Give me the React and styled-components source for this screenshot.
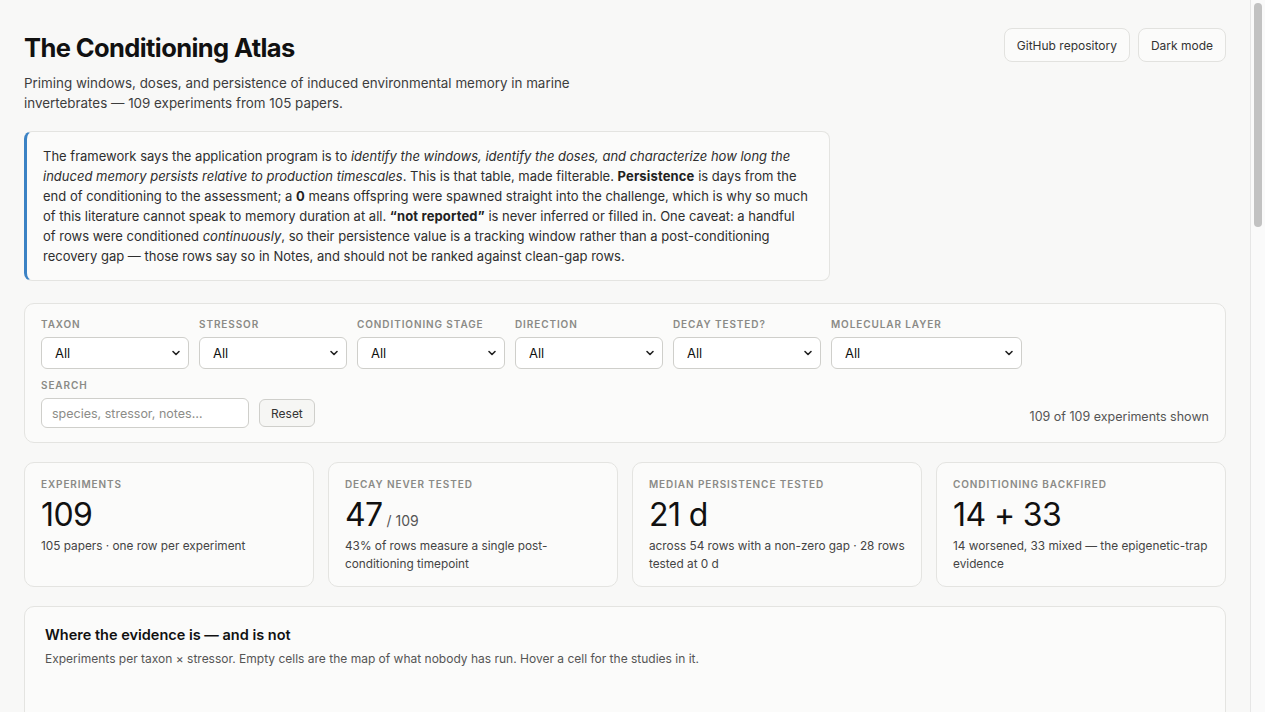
import React, { useState } from "react";
import styled, { createGlobalStyle } from "styled-components";

const GlobalStyle = createGlobalStyle`
  html, body {
    margin: 0;
    padding: 0;
    height: 100%;
    overflow: hidden;
    background: #f8f8f7;
    color: #1a1a1a;
    font-family: Inter, "Noto Sans", "Liberation Sans", sans-serif;
    -webkit-font-smoothing: antialiased;
  }
  * { box-sizing: border-box; }
`;

// window frame: scrolling content plus a slim classic scroll rail
const Shell = styled.div`
  display: flex;
  height: 100vh;
`;

const Main = styled.main`
  flex: 1;
  min-width: 0;
  overflow-y: auto;
`;

const ScrollRail = styled.div`
  flex: 0 0 15px;
  background: #fafafa;
  border-left: 1px solid #e6e6e6;
  padding: 3px 3px 0 3px;
`;

const ScrollThumb = styled.div`
  height: ${(p) => p.$h}px;
  border-radius: 5px;
  background: #c2c2c2;
`;

const Page = styled.div`
  padding: 24px 24px 48px;
  display: flex;
  flex-direction: column;
  gap: 19px;
`;

const Header = styled.header`
  display: flex;
  justify-content: space-between;
  align-items: flex-start;
  padding-top: 4px;
  margin-bottom: -1px;
`;

const TitleBlock = styled.div`
  display: flex;
  flex-direction: column;
  gap: 10px;
`;

const Title = styled.h1`
  margin: 4px 0 0;
  font-size: 25.5px;
  font-weight: 700;
  letter-spacing: -0.6px;
  color: #111;
`;

const Subtitle = styled.p`
  margin: 0;
  max-width: 560px;
  font-size: 13.4px;
  line-height: 20px;
  color: #3d3d3d;
`;

const HeaderActions = styled.div`
  display: flex;
  gap: 8px;
`;

const GhostButton = styled.button`
  font: inherit;
  font-size: 12px;
  color: #333;
  background: #fbfbfa;
  border: 1px solid #e2e2df;
  border-radius: 8px;
  padding: 0 12px;
  height: 34px;
  cursor: pointer;
`;

const Callout = styled.div`
  max-width: 806px;
  margin-bottom: 3px;
  background: #fbfbfa;
  border: 1px solid #e4e4e1;
  border-left: 3px solid #3b82c4;
  border-radius: 8px;
  padding: 14px 20px 14px 16px;
  font-size: 13px;
  line-height: 20px;
  color: #2e2e2e;

  em { font-style: italic; }
  strong { font-weight: 700; color: #222; letter-spacing: 0.15px; }
`;

const Panel = styled.section`
  background: #fbfbfa;
  border: 1px solid #e4e4e1;
  border-radius: 10px;
  padding: ${(p) => p.$pad || "16px"};
`;

const FilterRow = styled.div`
  display: flex;
  flex-wrap: wrap;
  gap: 10px;
  align-items: flex-end;
`;

const Field = styled.label`
  display: flex;
  flex-direction: column;
  gap: 7px;
  width: ${(p) => p.$w || 148}px;
`;

const FieldLabel = styled.span`
  display: block;
  font-size: 10px;
  line-height: 12px;
  font-weight: 600;
  letter-spacing: 0.9px;
  text-transform: uppercase;
  color: #8a8a86;
`;

const SelectWrap = styled.div`
  position: relative;

  svg {
    position: absolute;
    right: 8px;
    top: 50%;
    transform: translateY(-50%);
    pointer-events: none;
  }
`;

const Select = styled.select`
  appearance: none;
  width: 100%;
  height: 32px;
  font: inherit;
  font-size: 13px;
  color: #111;
  background: #fff;
  border: 1px solid #cfcfcb;
  border-radius: 6px;
  padding: 0 26px 0 13px;
`;

const SearchRow = styled.div`
  display: flex;
  align-items: flex-end;
  gap: 10px;
  margin-top: 10px;
`;

const SearchInput = styled.input`
  width: 208px;
  height: 30px;
  font: inherit;
  font-size: 12.5px;
  color: #111;
  background: #fff;
  border: 1px solid #cfcfcb;
  border-radius: 6px;
  padding: 0 10px;

  &::placeholder { color: #8c8c88; }
`;

const ResetButton = styled.button`
  font: inherit;
  font-size: 12px;
  color: #333;
  background: #f6f6f4;
  border: 1px solid #cfcfcb;
  border-radius: 6px;
  height: 28px;
  padding: 0 11px;
  margin-bottom: 1px;
`;

const Count = styled.span`
  margin-left: auto;
  font-size: 12.5px;
  color: #555;
  padding-bottom: 4px;
`;

const StatGrid = styled.div`
  display: grid;
  grid-template-columns: repeat(4, 1fr);
  gap: 14px;
`;

const StatCard = styled.div`
  background: #fbfbfa;
  border: 1px solid #e4e4e1;
  border-radius: 10px;
  padding: 15px 16px 13px;
  min-height: 125px;
`;

const StatValue = styled.div`
  margin: 6px 0 3px;
  height: 38px;
  font-size: 32px;
  line-height: 38px;
  font-weight: 400;
  letter-spacing: -0.6px;
  color: #111;

  small {
    font-size: 14px;
    line-height: 1;
    color: #555;
    letter-spacing: 0;
    margin-left: 4px;
  }
`;

const StatNote = styled.div`
  font-size: 11.8px;
  line-height: 18px;
  color: #444;
`;

const SectionTitle = styled.h2`
  margin: 0 0 6px;
  font-size: 14.5px;
  line-height: 20px;
  font-weight: 600;
  color: #111;
`;

const SectionNote = styled.p`
  margin: 0 0 64px;
  font-size: 12px;
  color: #555;
`;

const Heatmap = styled.div`
  display: grid;
  grid-template-columns: 140px repeat(${(p) => p.$cols}, 1fr);
  gap: 3px;
  font-size: 11px;
  color: #555;
`;

const Cell = styled.div`
  height: 28px;
  border-radius: 4px;
  display: flex;
  align-items: center;
  justify-content: center;
  background: ${(p) => (p.$n ? `rgba(59, 130, 196, ${0.15 + p.$n / 14})` : "#efefec")};
  color: ${(p) => (p.$n > 6 ? "#fff" : "#333")};
`;

const RowHead = styled.div`
  display: flex;
  align-items: center;
  justify-content: ${(p) => (p.$center ? "center" : "flex-start")};
`;

const Table = styled.table`
  width: 100%;
  border-collapse: collapse;
  font-size: 12px;

  th {
    text-align: left;
    font-size: 10px;
    letter-spacing: 0.9px;
    text-transform: uppercase;
    color: #8a8a86;
    font-weight: 600;
    padding: 8px 10px;
    border-bottom: 1px solid #e4e4e1;
  }

  td {
    padding: 9px 10px;
    border-bottom: 1px solid #eeeeeb;
    color: #333;
  }
`;

const Chevron = () => (
  <svg width="10" height="10" viewBox="0 0 10 10" fill="none">
    <path d="M2 3.5 5 6.5 8 3.5" stroke="#222" strokeWidth="1.6" strokeLinecap="round" strokeLinejoin="round" />
  </svg>
);

const filters = [
  { label: "Taxon", w: 148 },
  { label: "Stressor", w: 148 },
  { label: "Conditioning stage", w: 148 },
  { label: "Direction", w: 148 },
  { label: "Decay tested?", w: 148 },
  { label: "Molecular layer", w: 191 },
];

const stats = [
  { label: "Experiments", value: "109", note: "105 papers · one row per experiment" },
  { label: "Decay never tested", value: "47", of: "/ 109", note: "43% of rows measure a single post-conditioning timepoint" },
  { label: "Median persistence tested", value: "21 d", note: "across 54 rows with a non-zero gap · 28 rows tested at 0 d" },
  { label: "Conditioning backfired", value: "14 + 33", note: "14 worsened, 33 mixed — the epigenetic-trap evidence" },
];

const stressors = ["Heat", "Low pH", "Hypoxia", "Low salinity", "Pathogen", "Toxicant", "Multiple"];
const taxa = [
  ["Oysters", [9, 14, 2, 3, 5, 1, 4]],
  ["Mussels", [4, 6, 1, 2, 0, 2, 1]],
  ["Corals", [11, 3, 0, 0, 1, 0, 2]],
  ["Sea urchins", [2, 5, 0, 0, 0, 0, 1]],
  ["Abalone", [2, 1, 0, 0, 0, 0, 0]],
  ["Scallops", [1, 2, 0, 0, 0, 0, 0]],
  ["Copepods", [3, 4, 0, 1, 0, 2, 0]],
  ["Shrimp", [1, 0, 0, 1, 3, 0, 0]],
  ["Sea anemones", [2, 0, 0, 0, 0, 0, 0]],
  ["Polychaetes", [0, 1, 0, 0, 0, 1, 0]],
];

const rows = [
  ["Crassostrea gigas", "Low pH", "Parental", "Improved", "14"],
  ["Saccostrea glomerata", "Low pH", "Parental", "Improved", "0"],
  ["Mytilus edulis", "Heat", "Juvenile", "Mixed", "21"],
  ["Acropora nana", "Heat", "Adult", "Improved", "35"],
  ["Strongylocentrotus droebachiensis", "Low pH", "Parental", "Mixed", "0"],
  ["Tigriopus californicus", "Heat", "Multigenerational", "Improved", "not reported"],
  ["Haliotis discus hannai", "Heat", "Larval", "Worsened", "7"],
  ["Penaeus vannamei", "Pathogen", "Juvenile", "Improved", "28"],
  ["Nematostella vectensis", "Heat", "Adult", "Improved", "60"],
  ["Argopecten irradians", "Low pH", "Larval", "Mixed", "0"],
  ["Pocillopora damicornis", "Heat", "Adult", "Mixed", "14"],
  ["Mytilus galloprovincialis", "Hypoxia", "Juvenile", "Worsened", "10"],
  ["Crassostrea virginica", "Low salinity", "Juvenile", "Improved", "30"],
  ["Acartia tonsa", "Toxicant", "Multigenerational", "Mixed", "0"],
  ["Stylophora pistillata", "Heat", "Adult", "Improved", "42"],
  ["Paracentrotus lividus", "Multiple", "Parental", "Mixed", "0"],
  ["Ostrea lurida", "Low pH", "Parental", "Improved", "not reported"],
  ["Platynereis dumerilii", "Toxicant", "Larval", "Worsened", "3"],
];

export default function App() {
  const [query, setQuery] = useState("");

  return (
    <>
      <GlobalStyle />
      <Shell>
        <Main>
          <Page>
            <Header>
              <TitleBlock>
                <Title>The Conditioning Atlas</Title>
                <Subtitle>
                  Priming windows, doses, and persistence of induced environmental memory in marine
                  invertebrates — 109 experiments from 105 papers.
                </Subtitle>
              </TitleBlock>
              <HeaderActions>
                <GhostButton>GitHub repository</GhostButton>
                <GhostButton>Dark mode</GhostButton>
              </HeaderActions>
            </Header>

            <Callout>
              The framework says the application program is to{" "}
              <em>
                identify the windows, identify the doses, and characterize how long the induced
                memory persists relative to production timescales
              </em>
              . This is that table, made filterable. <strong>Persistence</strong> is days from the
              end of conditioning to the assessment; a <strong>0</strong> means offspring were
              spawned straight into the challenge, which is why so much of this literature cannot
              speak to memory duration at all. <strong>“not reported”</strong> is never inferred or
              filled in. One caveat: a handful of rows were conditioned <em>continuously</em>, so
              their persistence value is a tracking window rather than a post-conditioning recovery
              gap — those rows say so in Notes, and should not be ranked against clean-gap rows.
            </Callout>

            <Panel $pad="14px 16px 14px">
              <FilterRow>
                {filters.map((f) => (
                  <Field key={f.label} $w={f.w}>
                    <FieldLabel>{f.label}</FieldLabel>
                    <SelectWrap>
                      <Select defaultValue="All">
                        <option>All</option>
                      </Select>
                      <Chevron />
                    </SelectWrap>
                  </Field>
                ))}
              </FilterRow>
              <SearchRow>
                <Field $w={208}>
                  <FieldLabel>Search</FieldLabel>
                  <SearchInput
                    placeholder="species, stressor, notes…"
                    value={query}
                    onChange={(e) => setQuery(e.target.value)}
                  />
                </Field>
                <ResetButton onClick={() => setQuery("")}>Reset</ResetButton>
                <Count>109 of 109 experiments shown</Count>
              </SearchRow>
            </Panel>

            <StatGrid>
              {stats.map((s) => (
                <StatCard key={s.label}>
                  <FieldLabel>{s.label}</FieldLabel>
                  <StatValue>
                    {s.value}
                    {s.of && <small>{s.of}</small>}
                  </StatValue>
                  <StatNote>{s.note}</StatNote>
                </StatCard>
              ))}
            </StatGrid>

            <Panel $pad="18px 20px 24px">
              <SectionTitle>Where the evidence is — and is not</SectionTitle>
              <SectionNote>
                Experiments per taxon × stressor. Empty cells are the map of what nobody has run.
                Hover a cell for the studies in it.
              </SectionNote>
              <Heatmap $cols={stressors.length}>
                <div />
                {stressors.map((s) => (
                  <RowHead key={s} $center>{s}</RowHead>
                ))}
                {taxa.map(([name, counts]) => (
                  <React.Fragment key={name}>
                    <RowHead>{name}</RowHead>
                    {counts.map((n, i) => (
                      <Cell key={i} $n={n}>{n || ""}</Cell>
                    ))}
                  </React.Fragment>
                ))}
              </Heatmap>
            </Panel>

            <Panel $pad="20px">
              <SectionTitle>Experiments</SectionTitle>
              <Table>
                <thead>
                  <tr>
                    <th>Species</th>
                    <th>Stressor</th>
                    <th>Stage</th>
                    <th>Direction</th>
                    <th>Persistence (d)</th>
                  </tr>
                </thead>
                <tbody>
                  {rows.map((r) => (
                    <tr key={r[0] + r[1]}>
                      {r.map((c, i) => (
                        <td key={i}>{i === 0 ? <em>{c}</em> : c}</td>
                      ))}
                    </tr>
                  ))}
                </tbody>
              </Table>
            </Panel>
          </Page>
        </Main>
        <ScrollRail>
          <ScrollThumb $h={224} />
        </ScrollRail>
      </Shell>
    </>
  );
}
